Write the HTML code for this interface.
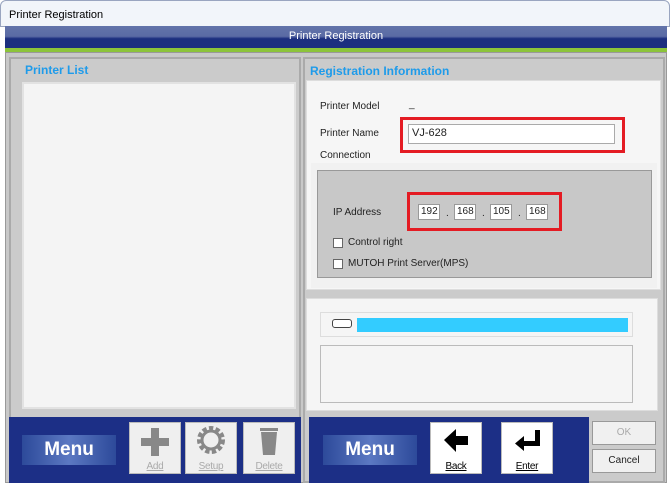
<!DOCTYPE html>
<html><head><style>
*{margin:0;padding:0;box-sizing:border-box}
body{width:670px;height:487px;background:#fff;position:relative;overflow:hidden;font-family:"Liberation Sans",sans-serif;font-size:10px;color:#222}
.a{position:absolute}
.menu{position:absolute;width:94px;height:30px;background:linear-gradient(90deg,#2d4a9a,#5b78c2 50%,#2d4a9a);color:#fff;font-weight:bold;font-size:19px;text-align:center;line-height:30px}
.tb{position:absolute;width:52px;height:52px;background:#efefef;border:1px solid #bbb;text-align:center}
.tb span{position:absolute;left:0;right:0;bottom:1px;font-size:10px;text-decoration:underline;letter-spacing:-.3px}
.gray span{color:#aaa}
.bt{position:absolute;background:#f0f0f0;border:1px solid #999;text-align:center;font-size:10px;line-height:22px}
.ip{position:absolute;top:204px;width:22px;height:16px;background:#fff;border:1px solid #999;font-size:10px;line-height:14px;padding-left:2px}
.dot{position:absolute;top:208px;font-size:10px}
.cb{position:absolute;width:10px;height:10px;background:#fff;border:1px solid #666}
</style></head><body>
<div class="a" style="left:0;top:0;width:670px;height:27px;background:#f2f5fa;border:1px solid #9aa5c0;border-radius:6px 6px 0 0"></div>
<div class="a" style="left:9px;top:9px;font-size:11px;color:#000">Printer Registration</div>
<div class="a" style="left:5px;top:26px;width:662px;height:23px;background:linear-gradient(180deg,#6374aa 0%,#5a6aa4 45%,#1c2f7f 55%,#1c2f7f 100%)"></div>
<div class="a" style="left:5px;top:30px;width:662px;text-align:center;color:#fff;font-size:11px">Printer Registration</div>
<div class="a" style="left:5px;top:48px;width:662px;height:4px;background:#8cc43a"></div>
<div class="a" style="left:5px;top:52px;width:662px;height:431px;background:#c8c8c8;border:1px solid #999"></div>
<!-- left panel -->
<div class="a" style="left:9px;top:57px;width:292px;height:426px;background:#cbcbcb;border:2px solid #aaa"></div>
<div class="a" style="left:25px;top:63px;color:#1e9bea;font-weight:bold;font-size:12px">Printer List</div>
<div class="a" style="left:22px;top:82px;width:274px;height:327px;background:#f4f4f4;border:2px solid #e2e2e2"></div>
<div class="a" style="left:9px;top:417px;width:292px;height:66px;background:#1c2f86"></div>
<div class="menu" style="left:22px;top:435px">Menu</div>
<div class="tb gray" style="left:129px;top:422px"><svg width="50" height="36" viewBox="0 0 50 36"><path d="M21 5h8v10h10v8H29v10h-8V23H11v-8h10z" fill="#888"/></svg><span>Add</span></div>
<div class="tb gray" style="left:185px;top:422px"><svg width="50" height="36" viewBox="0 0 50 36"><circle cx="25" cy="17" r="11" fill="none" stroke="#888" stroke-width="6" stroke-dasharray="4 2.2"/><circle cx="25" cy="17" r="9" fill="none" stroke="#888" stroke-width="3"/></svg><span>Setup</span></div>
<div class="tb gray" style="left:243px;top:422px"><svg width="50" height="36" viewBox="0 0 50 36"><path d="M17 9h16l-2 23H19z" fill="#888"/><rect x="16" y="5" width="18" height="3" fill="#888"/></svg><span>Delete</span></div>
<!-- right panel -->
<div class="a" style="left:303px;top:57px;width:362px;height:426px;background:#cbcbcb;border:2px solid #aaa"></div>
<div class="a" style="left:310px;top:64px;color:#1e9bea;font-weight:bold;font-size:12px">Registration Information</div>
<div class="a" style="left:306px;top:80px;width:355px;height:210px;background:#f6f6f6;border:1px solid #ddd"></div>
<div class="a" style="left:320px;top:101px">Printer Model</div>
<div class="a" style="left:409px;top:99px">_</div>
<div class="a" style="left:320px;top:128px">Printer Name</div>
<div class="a" style="left:320px;top:150px">Connection</div>
<div class="a" style="left:400px;top:117px;width:225px;height:36px;border:3px solid #e41b23"></div>
<div class="a" style="left:408px;top:124px;width:207px;height:20px;background:#fff;border:1px solid #aaa;font-size:11px;padding:2px 3px">VJ-628</div>
<div class="a" style="left:311px;top:163px;width:346px;height:125px;background:#f1f1f1"></div>
<div class="a" style="left:317px;top:170px;width:335px;height:108px;background:#c8c8c8;border:1px solid #999"></div>
<div class="a" style="left:333px;top:207px">IP Address</div>
<div class="a" style="left:407px;top:192px;width:155px;height:39px;border:3px solid #e41b23"></div>
<div class="ip" style="left:418px">192</div><div class="dot" style="left:446px">.</div>
<div class="ip" style="left:454px">168</div><div class="dot" style="left:482px">.</div>
<div class="ip" style="left:490px">105</div><div class="dot" style="left:518px">.</div>
<div class="ip" style="left:526px">168</div>
<div class="cb" style="left:333px;top:238px"></div><div class="a" style="left:348px;top:237px">Control right</div>
<div class="cb" style="left:333px;top:259px"></div><div class="a" style="left:348px;top:258px">MUTOH Print Server(MPS)</div>
<div class="a" style="left:306px;top:298px;width:352px;height:113px;background:#f5f5f5;border:1px solid #ddd"></div>
<div class="a" style="left:320px;top:312px;width:313px;height:25px;border:1px solid #ddd"></div>
<div class="a" style="left:332px;top:319px;width:20px;height:9px;border:1px solid #444;border-radius:3px;background:#fff"></div>
<div class="a" style="left:357px;top:318px;width:271px;height:14px;background:#33ccff"></div>
<div class="a" style="left:320px;top:345px;width:313px;height:58px;border:1px solid #bbb"></div>
<div class="a" style="left:309px;top:417px;width:280px;height:66px;background:#1c2f86"></div>
<div class="menu" style="left:323px;top:435px">Menu</div>
<div class="tb" style="left:430px;top:422px;background:#fff"><svg width="50" height="36" viewBox="0 0 50 36"><path d="M13 17L25 6v7h12v9H25v7z" fill="#000"/></svg><span style="color:#000">Back</span></div>
<div class="tb" style="left:501px;top:422px;background:#fff"><svg width="50" height="36" viewBox="0 0 50 36"><path d="M33 7h5v16H22v5l-9-7.5 9-7.5v5h11z" fill="#000"/></svg><span style="color:#000">Enter</span></div>
<div class="bt" style="left:592px;top:421px;width:64px;height:24px;color:#aaa">OK</div>
<div class="bt" style="left:592px;top:449px;width:64px;height:24px">Cancel</div>
</body></html>
